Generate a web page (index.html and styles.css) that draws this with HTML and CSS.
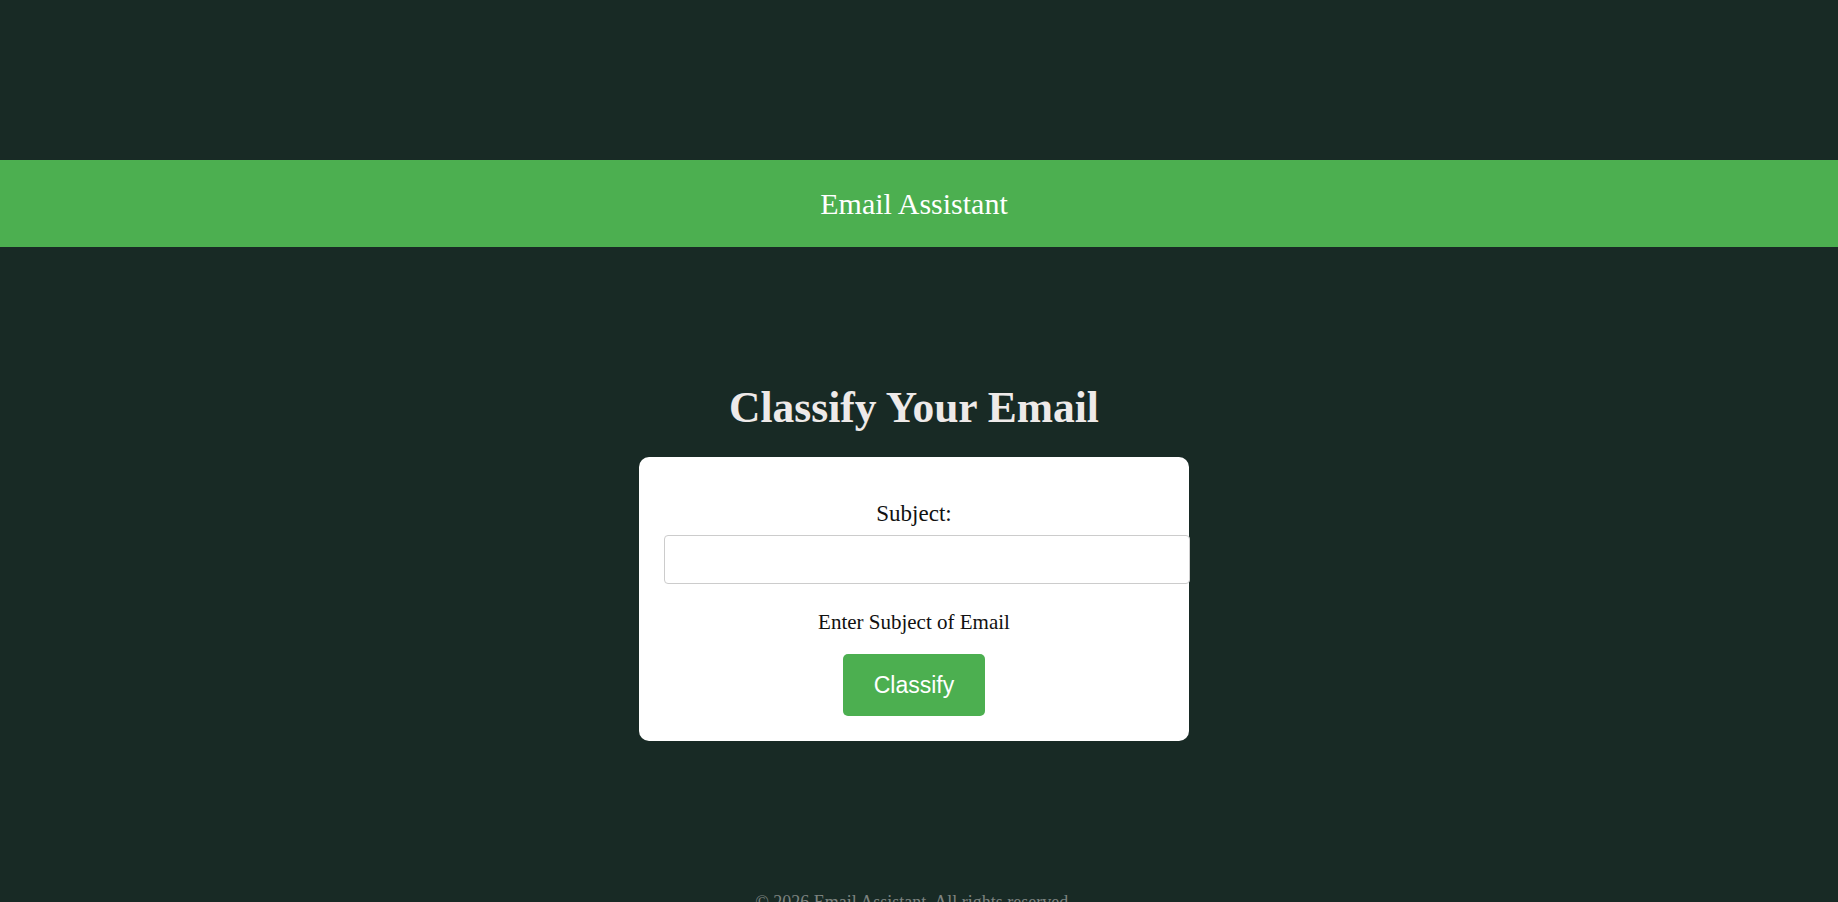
FILE: index.html
```html
<!DOCTYPE html>
<html lang="en">
<head>
<meta charset="utf-8">
<title>Email Assistant</title>
<link rel="stylesheet" href="styles.css">
</head>
<body>
<div class="page">
  <div class="top-space"></div>
  <header class="site-header">
    <span class="brand">Email Assistant</span>
  </header>
  <main class="main">
    <h1 class="title">Classify Your Email</h1>
    <form class="card" onsubmit="return false;">
      <label class="label" for="subject">Subject:</label>
      <input class="input" id="subject" type="text">
      <p class="hint">Enter Subject of Email</p>
      <button class="btn" type="submit">Classify</button>
    </form>
  </main>
  <footer class="footer">© 2026 Email Assistant. All rights reserved.</footer>
</div>
</body>
</html>
```

FILE: styles.css
```css
html, body {
  margin: 0;
  padding: 0;
  height: 100%;
  overflow: hidden;
  background: #182a25;
}

.page {
  font-family: "Liberation Serif", "Times New Roman", serif;
  display: flex;
  flex-direction: column;
}

.top-space {
  height: 160px;
}

.site-header {
  height: 87px;
  padding-right: 10px;
  background: #4caf50;
  display: flex;
  align-items: center;
  justify-content: center;
}

.brand {
  color: #ffffff;
  font-size: 30px;
  line-height: 34px;
  padding-top: 1px;
}

.main {
  display: flex;
  flex-direction: column;
  align-items: center;
  padding-top: 135px;
  padding-right: 10px;
}

.title {
  margin: 0;
  color: #eeeae9;
  font-size: 43.5px;
  line-height: 50px;
  font-weight: bold;
}

.card {
  margin-top: 25px;
  width: 500px;
  padding: 43px 25px 25px;
  background: #ffffff;
  border-radius: 10px;
  text-align: center;
  display: flex;
  flex-direction: column;
  align-items: stretch;
}

.label {
  font-size: 23px;
  line-height: 27px;
  color: #111;
}

.input {
  margin-top: 8px;
  width: 100%;
  height: 23px;
  padding: 12px;
  border: 1px solid #cccccc;
  border-radius: 4px;
  box-sizing: content-box;
  font-size: 16px;
  background: #fff;
}

.hint {
  margin: 26px 0 0;
  font-size: 21px;
  line-height: 24px;
  color: #111;
}

.btn {
  margin: 20px auto 0;
  padding: 18px 31px;
  background: #4caf50;
  color: #ffffff;
  border: none;
  border-radius: 5px;
  font-family: "Liberation Sans", Arial, sans-serif;
  font-size: 23px;
  line-height: 26px;
}

.footer {
  margin-top: 151px;
  padding-right: 10px;
  text-align: center;
  color: #7d8380;
  font-size: 18px;
  line-height: 20px;
}
```
